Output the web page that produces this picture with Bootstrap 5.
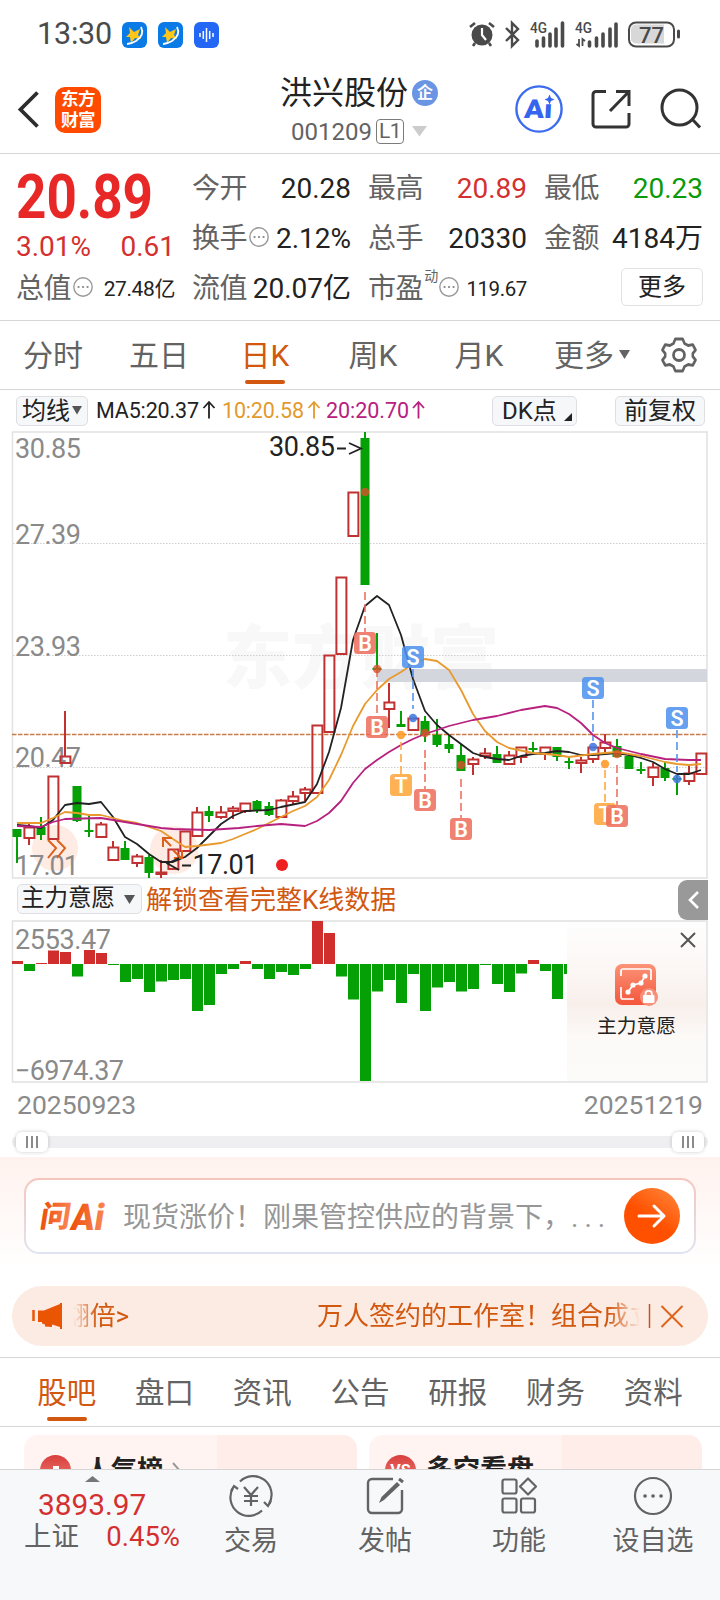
<!DOCTYPE html>
<html lang="zh-CN">
<head>
<meta charset="utf-8">
<meta name="viewport" content="width=device-width, initial-scale=1">
<title>洪兴股份 001209</title>
<link rel="stylesheet" href="https://cdn.jsdelivr.net/npm/bootstrap@5.3.0/dist/css/bootstrap.min.css">
<style>
  :root { --ink:#222; --sub:#636363; --axis:#8a8a8a; --rise:#d4302f; --fall:#0a9a0a; --brand:#d2570f; --rule:#d6d6d6; }
  body { width:720px; height:1600px; overflow:hidden; background:#fff; color:var(--ink); font-family:Roboto,"Noto Sans CJK SC",sans-serif; line-height:1; }
  svg { display:block; flex:none; overflow:visible; }
  svg text { font-family:Roboto,"Noto Sans CJK SC",sans-serif; }
  .status { height:66px; padding:3px 40px 0 37px; color:#4a4a4a; }
  .clock { font-size:30.5px; margin-right:10px; letter-spacing:-.2px; }
  .topbar { height:88px; display:grid; grid-template-columns:1fr auto 1fr; align-items:center; border-bottom:1px solid var(--rule); padding:0 19px 0 17px; }
  .brandmark { width:46px; height:46px; border-radius:10px; background:#ff4a00; color:#fff; font-size:17.5px; font-weight:700; line-height:21px; letter-spacing:-.6px; text-align:center; padding-top:2px; margin-left:14px; }
  .stockname { font-size:32px; }
  .corp { width:26px; height:26px; border-radius:50%; background:#6a94e4; color:#fff; font-size:16px; font-weight:700; }
  .code { font-size:24px; color:var(--sub); }
  .level { width:28px; height:25px; border:1.5px solid #7b7b7b; border-radius:4px; font-size:21px; letter-spacing:-.5px; }
  .quote { height:167px; border-bottom:1px solid var(--rule); padding:10px 17px 0 16px; display:grid; grid-template-columns:repeat(4,1fr); grid-template-rows:repeat(3,50px); column-gap:17px; font-size:28px; white-space:nowrap; }
  .quote .cellx { display:flex; align-items:center; justify-content:space-between; min-width:0; }
  .quote .lbl { color:var(--sub); display:flex; align-items:center; gap:2px; letter-spacing:-.4px; }
  .quote .slim { font-size:21px; letter-spacing:-.4px; }
  .rise { color:var(--rise); } .fall { color:var(--fall); }
  .lead-price { grid-row:1 / span 2; padding-bottom:3px; }
  .morebtn { width:82px; height:38px; border:1.5px solid #e2e2e2; border-radius:5px; font-size:24px; color:var(--ink); padding:0; line-height:1; margin-bottom:4px; }
  .period { height:69px; border-bottom:1px solid var(--rule); font-size:30px; color:var(--sub); }
  .period .tabx { width:106px; height:68px; position:relative; padding-top:2px; }
  .tabx.on { color:var(--brand); }
  .tabx.on::after { content:""; position:absolute; left:50%; margin-left:-20px; bottom:5px; width:40px; height:4px; border-radius:2px; background:var(--brand); }
  .tools { height:41px; padding:0 15px 0 16px; font-size:21.5px; white-space:nowrap; }
  .chip { height:30px; border:1.5px solid #dddfe3; border-radius:5px; background:#f6f7f9; font-size:24px; display:flex; align-items:center; }
  .strip { height:41px; padding:5px 12px 0 17px; }
  .strip .unlock { font-size:26px; color:var(--brand); margin:3px 0 0 4px; letter-spacing:0; }
  .collapse-key { width:30px; height:40px; border-radius:9px 0 0 9px; background:#999; margin-top:-4px; }
  .dates { height:41px; padding:2px 17px 0; font-size:26.5px; color:var(--axis); }
  .slider { height:32px; padding:11px 12px 0; }
  .track { height:12px; border-radius:6px; background:#efeff2; }
  .grip { width:32px; height:20px; border-radius:6px; background:#fff; box-shadow:0 0 4px #0003; }
  .ask { height:129px; padding:21px 24px 0; background:linear-gradient(#fff2ee,#fff 88%); }
  .askbox { height:76px; border:2px solid transparent; border-radius:15px; background:linear-gradient(#fff,#fff) padding-box,linear-gradient(#f5c5bd,#dfe4f0) border-box; padding:0 14px 0 12px; }
  .askbox .q { font-size:28px; color:#969696; margin:3px 0 0 19px; white-space:nowrap; }
  .go { width:56px; height:56px; border-radius:50%; background:linear-gradient(35deg,#ff5000 45%,#ff8a3d); }
  .notice { height:60px; margin:0 12px; border-radius:30px; background:#fcebe2; color:var(--brand); font-size:26px; padding:0 24px 0 20px; white-space:nowrap; }
  .marquee { width:567px; margin-left:10px; padding:2px 0; overflow:hidden; display:flex; -webkit-mask-image:linear-gradient(90deg,transparent,#000 24px,#000 535px,transparent 567px); mask-image:linear-gradient(90deg,transparent,#000 24px,#000 535px,transparent 567px); }
  .sections { height:70px; margin-top:11px; border-top:1px solid var(--rule); border-bottom:1px solid var(--rule); padding:0 18px; font-size:29.5px; color:var(--sub); }
  .sections .tabx { height:68px; position:relative; padding-top:4px; }
  .teasers { height:42px; padding:8px 18px 0 24px; gap:12px; overflow:hidden; }
  .teaser { width:333px; height:80px; border-radius:14px; background:linear-gradient(90deg,#fff4f1 58%,#ffedea 58%); font-size:26px; font-weight:700; padding:20px 16px 0; overflow:hidden; }
  .dot { width:31px; height:31px; border-radius:50%; background:linear-gradient(#d83f3f,#f08070); color:#fff; font-size:16px; }
  .dock { height:131px; border-top:1px solid var(--rule); background:#f7f8fa; color:var(--sub); font-size:27px; }
  .dock .item { padding-top:6px; }
  .dock .item span { margin-top:12px; }
  .dock .index { width:180px; padding:6px 0 0 24px; }
</style>
</head>
<body>
<div class="status d-flex align-items-center">
  <span class="clock">13:30</span>
  <div class="d-flex me-auto" style="gap:11px">
    <svg width="25" height="26"><use href="#app"/></svg>
    <svg width="25" height="26"><use href="#app"/></svg>
    <svg width="25" height="26"><rect width="25" height="26" rx="6" fill="#2467f5"/><path d="M6 11v4M9.3 9v8M12.5 6v14M15.7 9v8M19 11v4" stroke="#fff" stroke-width="1.5"/></svg>
  </div>
  <svg width="212" height="28" viewBox="468 21 212 28">
    <g fill="none" stroke="#4a4a4a">
      <circle cx="482" cy="35" r="10.500" fill="#4a4a4a" stroke="none"/><path d="M482 28v7l4 5" stroke="#fff" stroke-width="2.2"/><path d="M470 27l5-4M494 27l-5-4M475 43l-2 3M489 43l2 3" stroke-width="2.6"/>
      <path d="M506 28l12 12-6 6V23l6 6-12 12" stroke-width="2.4"/>
      <path d="M537 46v-5M543.5 46v-8M550 46V34M556 46V29M562.500 46V23" stroke-width="3.6" stroke-linecap="round"/>
      <path d="M589.500 46v-4M596.500 46v-8M603 46V34M610 46V29M616 46V24" stroke-width="3.6" stroke-linecap="round"/>
      <path d="M579 39v7l-2.500-2M582.500 46v-7l2.500 2" stroke-width="1.8"/>
    </g>
    <path d="M636 24.500h28v19h-28a5 5 0 0 1-5-5v-9a5 5 0 0 1 5-5" fill="#d8d8d8"/>
    <rect x="629" y="22.500" width="45" height="24" rx="7" stroke-width="2" fill="none" stroke="#4a4a4a"/><path d="M678.500 31v6" stroke="#4a4a4a" stroke-width="3" stroke-linecap="round"/>
    <g fill="#4a4a4a" font-weight="500"><text x="530" y="33" font-size="14.500" textLength="17" lengthAdjust="spacingAndGlyphs">4G</text><text x="575" y="33" font-size="14.500" textLength="17" lengthAdjust="spacingAndGlyphs">4G</text><text x="639" y="42.500" font-size="22" textLength="25">77</text></g>
    <defs>
      <symbol id="app" viewBox="0 0 25 26"><rect width="25" height="26" rx="6" fill="#0a7be6"/><path d="M7 5l5 5 6-3-2 6 3 4-6-1-4 5-1-6-4 0 4-4z" fill="#ffc61a"/><path d="M19 5q4 8-5 14-5 3-9 3" fill="none" stroke="#fff" stroke-width="1.800"/></symbol>
      <symbol id="more" viewBox="0 0 20 20"><circle cx="10" cy="10" r="9.200" fill="none" stroke="#999" stroke-width="1.400"/><path d="M5.500 10h.1M10 10h.1M14.500 10h.1" stroke="#888" stroke-width="2.200" stroke-linecap="round"/></symbol>
    </defs>
  </svg>
</div>

<header class="topbar">
  <div class="d-flex align-items-center">
    <svg width="24" height="38" viewBox="0 0 24 38"><path d="M20.500 1.500L3.500 18.500l17 17" fill="none" stroke="#2d2d2d" stroke-width="3.800"/></svg>
    <div class="brandmark">东方<br>财富</div>
  </div>
  <div class="d-flex flex-column align-items-center" style="gap:10px;margin-top:2px">
    <div class="d-flex align-items-center"><span class="stockname">洪兴股份</span><span class="corp d-flex align-items-center justify-content-center ms-1">企</span></div>
    <div class="code d-flex align-items-center"><span>001209</span><span class="level d-flex align-items-center justify-content-center mx-1">L1</span>
      <svg class="ms-1" width="15" height="11"><path d="M0 0h15L7.500 10.500z" fill="#ccc"/></svg></div>
  </div>
  <svg class="ms-auto" width="186" height="48" viewBox="515 86 186 48">
    <g fill="none" stroke="#333" stroke-width="3">
      <circle cx="539" cy="109" r="22.600" stroke="#3b6cf0" stroke-width="2.400"/>
      <path d="M606 91.500h-10a3 3 0 0 0-3 3V124a3 3 0 0 0 3 3h30a3 3 0 0 0 3-3v-11M616 91.500h13V106M629 91.500L610 111"/>
      <circle cx="679.500" cy="107.500" r="17.500"/><path d="M692 119l8 8.500"/>
    </g>
    <text x="524" y="118.500" font-size="26" font-weight="900" fill="#3565ee" textLength="28" lengthAdjust="spacingAndGlyphs" transform="skewX(-3) translate(6 0)">Ai</text>
    <circle cx="549" cy="99" r="4.500" fill="#fff"/><path d="M549.500 94.500l1.500 3.500 3.500 1.500-3.500 1.500-1.500 3.500-1.500-3.500-3.500-1.500 3.500-1.500z" fill="#3565ee"/>
  </svg>
</header>

<section class="quote">
  <div class="lead-price d-flex flex-column justify-content-between rise">
    <svg width="150" height="60"><text x="0" y="53.500" font-size="61" font-weight="700" fill="#e82727" textLength="137" lengthAdjust="spacingAndGlyphs">20.89</text></svg>
    <div class="d-flex justify-content-between"><span>3.01%</span><span>0.61</span></div>
  </div>
  <div class="cellx"><span class="lbl">今开</span><span>20.28</span></div>
  <div class="cellx"><span class="lbl">最高</span><span class="rise">20.89</span></div>
  <div class="cellx"><span class="lbl">最低</span><span class="fall">20.23</span></div>
  <div class="cellx"><span class="lbl">换手<svg width="20" height="20" class="mb-1"><use href="#more"/></svg></span><span>2.12%</span></div>
  <div class="cellx"><span class="lbl">总手</span><span>20330</span></div>
  <div class="cellx"><span class="lbl">金额</span><span>4184万</span></div>
  <div class="cellx"><span class="lbl">总值<svg width="20" height="20" class="mb-1"><use href="#more"/></svg></span><span class="slim">27.48亿</span></div>
  <div class="cellx"><span class="lbl">流值</span><span>20.07亿</span></div>
  <div class="cellx"><span class="lbl">市盈<span style="font-size:14px;margin:0 -1px 26px -1px">动</span><svg width="20" height="20" class="mb-1"><use href="#more"/></svg></span><span class="slim" style="font-size:20.500px">119.67</span></div>
  <div class="cellx justify-content-end"><button class="morebtn btn bg-white">更多</button></div>
</section>

<nav class="period d-flex align-items-center">
  <div class="tabx d-flex align-items-center justify-content-center">分时</div>
  <div class="tabx d-flex align-items-center justify-content-center">五日</div>
  <div class="tabx on d-flex align-items-center justify-content-center">日K</div>
  <div class="tabx d-flex align-items-center justify-content-center ps-1">周K</div>
  <div class="tabx d-flex align-items-center justify-content-center ps-1">月K</div>
  <div class="d-flex align-items-center" style="margin-left:24px;padding-top:2px">更多<svg class="mb-1" style="margin-left:5px" width="11" height="9"><path d="M0 0h11L5.500 9z" fill="#636363"/></svg></div>
  <svg class="ms-auto" style="margin-right:23px" width="36" height="36" viewBox="-18 -18 36 36" fill="none" stroke="#636363" stroke-width="2.800" stroke-linejoin="round"><path d="M-4-16h8l2 4.500 4 2 5-.8 3 5.300-3 3.500v3l3 3.500-3 5.300-5-.8-4 2-2 4.500h-8l-2-4.500-4-2-5 .8-3-5.300 3-3.500v-3l-3-3.500 3-5.300 5 .8 4-2z" transform="scale(.92 1)"/><circle r="5.500"/></svg>
</nav>

<div class="tools d-flex align-items-center">
  <div class="chip" style="width:72px;padding-left:5px">均线<svg style="margin-left:2px" width="10" height="9"><path d="M0 0h10L5 8.500z" fill="#555"/></svg></div>
  <svg width="340" height="30" viewBox="88 396.500 340 30" font-size="21.500">
    <g id="maText"><text x="96" y="418.500" textLength="103" fill="#222">MA5:20.37</text><text x="222" y="418.500" textLength="82" fill="#e39a2c">10:20.58</text><text x="326" y="418.500" textLength="83" fill="#b8207f">20:20.70</text></g>
    <g fill="none" stroke-width="1.800"><path d="M209 419v-16.500M203.500 408.500l5.500-6 5.500 6" stroke="#222"/><path d="M314 419v-16.500M308.500 408.500l5.500-6 5.500 6" stroke="#e39a2c"/><path d="M418.500 419v-16.500M413 408.500l5.500-6 5.500 6" stroke="#b8207f"/></g>
  </svg>
  <div class="chip ms-auto position-relative" style="width:85px;padding-left:9px">DK点<svg class="position-absolute" style="right:4px;bottom:4px" width="8" height="8"><path d="M8 0v8H0z" fill="#222"/></svg></div>
  <div class="chip justify-content-center" style="width:90px;margin-left:38px">前复权</div>
</div>

<svg id="kline" width="720" height="448" viewBox="0 431 720 448"></svg>

<div class="strip d-flex align-items-start">
  <div class="chip" style="width:125px;padding-left:3px;font-size:23.500px">主力意愿<svg style="margin-left:9px" width="11" height="9"><path d="M0 0h11L5.500 9z" fill="#555"/></svg></div>
  <span class="unlock">解锁查看完整K线数据</span>
  <div class="collapse-key ms-auto d-flex align-items-center justify-content-center"><svg width="14" height="20"><path d="M12 2L4 10l8 8" fill="none" stroke="#fff" stroke-width="2.600"/></svg></div>
</div>

<svg id="force" width="720" height="164" viewBox="0 920 720 164"></svg>

<div class="dates d-flex justify-content-between align-items-center"><span>20250923</span><span>20251219</span></div>
<div class="slider"><div class="track d-flex align-items-center justify-content-between px-1">
  <div class="grip d-flex align-items-center justify-content-center"><svg width="12" height="12"><path d="M1 0v12M6 0v12M11 0v12" stroke="#666" stroke-width="1.500"/></svg></div>
  <div class="grip d-flex align-items-center justify-content-center"><svg width="12" height="12"><path d="M1 0v12M6 0v12M11 0v12" stroke="#666" stroke-width="1.500"/></svg></div>
</div></div>

<section class="ask"><div class="askbox d-flex align-items-center">
  <svg width="66" height="36" viewBox="38 1198 66 36"><defs><linearGradient id="og" x1="0" x2="1"><stop stop-color="#ee4d08"/><stop offset="1" stop-color="#f98655"/></linearGradient></defs>
    <g fill="url(#og)" font-weight="900"><text transform="translate(39 1227) skewX(-9)" font-size="30" font-weight="900">问</text><text transform="translate(69.500 1230) skewX(-9)" font-size="37" textLength="33" lengthAdjust="spacingAndGlyphs">Ai</text></g></svg>
  <span class="q">现货涨价！刚果管控供应的背景下，<span style="letter-spacing:6px">...</span></span>
  <div class="go ms-auto d-flex align-items-center justify-content-center"><svg width="30" height="26"><path d="M2 13h25M17 3l10 10-10 10" fill="none" stroke="#fff" stroke-width="3" stroke-linecap="round" stroke-linejoin="round"/></svg></div>
</div></section>

<div class="notice d-flex align-items-center">
  <svg width="31" height="28"><path d="M1.500 8v11" stroke="#ea5504" stroke-width="2.500"/><path d="M6 8.500h6L28 2V1h2v26h-2v-2l-8-2.500v2.500l-7-.5v-2l-3-1v-1.500H6z" fill="#ea5504"/></svg>
  <div class="marquee"><span style="margin-left:-9px;letter-spacing:-.2px">翃倍&gt;</span><span style="margin-left:188px">万人签约的工作室！组合成立</span></div>
  <svg class="ms-auto" width="36" height="26"><path d="M1.500 1v24" stroke="#c0591f" stroke-width="1.500"/><path d="M13.500 3l21 21M34.500 3l-21 21" stroke="#e0631c" stroke-width="2"/></svg>
</div>

<nav class="sections d-flex">
  <div class="tabx on flex-fill d-flex align-items-center justify-content-center">股吧</div>
  <div class="tabx flex-fill d-flex align-items-center justify-content-center">盘口</div>
  <div class="tabx flex-fill d-flex align-items-center justify-content-center">资讯</div>
  <div class="tabx flex-fill d-flex align-items-center justify-content-center">公告</div>
  <div class="tabx flex-fill d-flex align-items-center justify-content-center">研报</div>
  <div class="tabx flex-fill d-flex align-items-center justify-content-center">财务</div>
  <div class="tabx flex-fill d-flex align-items-center justify-content-center">资料</div>
</nav>
<div class="teasers d-flex">
  <div class="teaser d-flex align-items-start"><span class="dot"><svg width="31" height="31"><path d="M6 18h3v-3h4v-4h6v7h4v6H6z" fill="#fff"/></svg></span><span style="margin:2px 0 0 14px">人气榜</span><svg style="margin:7px 0 0 9px" width="10" height="18"><path d="M1 1l7 8-7 8" fill="none" stroke="#999" stroke-width="2"/></svg></div>
  <div class="teaser d-flex align-items-start"><span class="dot d-flex align-items-center justify-content-center">VS</span><span style="margin:2px 0 0 10px;font-size:27px">多空看盘</span></div>
</div>

<footer class="dock d-flex">
  <div class="index">
    <svg style="margin-left:61px" width="15" height="6"><path d="M0 6L7.500 0 15 6z" fill="#777"/></svg>
    <div class="rise" style="font-size:29.800px;margin:8px 0 0 14px">3893.97</div>
    <div class="d-flex justify-content-between" style="font-size:27.500px;margin-top:3px"><span>上证</span><span class="rise">0.45%</span></div>
  </div>
  <div class="item d-flex flex-column align-items-center" style="width:142px">
    <svg width="46" height="40" viewBox="-23 -20 46 40" fill="none" stroke="#636363" stroke-width="2.200"><path d="M-11-14.500A18.500 18.500 0 0 1 18 8M11 14.500A18.500 18.500 0 0 1-18-8"/><path d="M20 5l-3 5-4-4M-20-5l3-5 4 3"/><path d="M-7-9L0-1l7-8M0-1v11M-7 0H7M-7 5H7"/></svg>
    <span>交易</span></div>
  <div class="item d-flex flex-column align-items-center" style="width:126px">
    <svg width="40" height="40" viewBox="0 0 40 40" fill="none" stroke="#636363" stroke-width="2.400"><path d="M28 3H7a4 4 0 0 0-4 4v26a4 4 0 0 0 4 4h26a4 4 0 0 0 4-4V14"/><path d="M14 27l2.500-6L32 6l3 3L19 24z" fill="#636363" stroke="none"/><path d="M34 3l4 3" stroke-width="3"/></svg>
    <span>发帖</span></div>
  <div class="item d-flex flex-column align-items-center" style="width:142px">
    <svg width="38" height="40" viewBox="0 0 38 40" fill="none" stroke="#636363" stroke-width="2.200"><rect x="2.500" y="3.500" width="14" height="14" rx="2"/><rect x="2.500" y="22.500" width="14" height="14" rx="2"/><rect x="21" y="22.500" width="14" height="14" rx="2"/><path d="M28 2.500l8 8-8 8-8-8z" stroke-linejoin="round"/></svg>
    <span>功能</span></div>
  <div class="item d-flex flex-column align-items-center" style="width:126px">
    <svg width="40" height="40" viewBox="0 0 40 40" fill="none" stroke="#636363"><circle cx="20" cy="20" r="18" stroke-width="2.200"/><path d="M12 20h.1M20 20h.1M28 20h.1" stroke-width="3.600" stroke-linecap="round"/></svg>
    <span>设自选</span></div>
</footer>

<script src="https://cdn.jsdelivr.net/npm/bootstrap@5.3.0/dist/js/bootstrap.bundle.min.js"></script>
<script>
  const RED = '#c03231', GREEN = '#05a005';
  const X = i => 17 + 12 * i;
  const txt = (x, y, s, len, fill = '#8a8a8a', size = 27) => `<text x="${x}" y="${y}" font-size="${size}" fill="${fill}" textLength="${len}">${s}</text>`;

  // r/g, body top, body bottom, wick top, wick bottom
  const candles = [
    ['g',829,837,829,863],['r',827,838,822,845],['g',827,835,817,840],['r',776,839,776,839],['r',756,763,711,763],
    ['g',786,821,786,822],['g',830,832,816,837],['r',824,837,822,838],['r',847,860,841,860],['g',848,860,841,860],
    ['r',856,863,854,867],['g',857,873,855,878],['r',872,874,860,878],['r',849,869,849,869],['r',831,851,831,851],
    ['r',812,836,807,836],['g',811,816,806,822],['r',812,817,806,819],['r',808,811,806,819],['r',803,811,803,813],
    ['g',801,810,800,813],['g',806,815,802,816],['r',800,817,799,817],['r',796,801,791,804],['r',789,793,787,801],
    ['r',725,793,725,793],['r',655,732,655,733],['r',577,654,577,654],['r',492,536,492,536],['g',438,585,432,585],
    ['g',668,670,633,670],['r',702,709,683,728],['g',724,727,711,727],['r',718,730,718,730],['g',721,735,716,742],
    ['g',735,745,719,747],['g',744,749,735,753],['g',755,771,744,771],['r',759,764,757,775],['r',753,756,748,759],
    ['g',754,763,746,763],['r',755,764,751,764],['r',747,757,747,763],['g',748,750,742,753],['r',747,754,747,760],
    ['g',747,757,747,761],['g',761,763,757,769],['r',760,763,757,773],['r',747,759,747,763],['r',742,748,734,755],
    ['g',746,757,739,757],['g',756,769,755,769],['g',769,771,762,774],['r',767,777,763,786],['g',768,778,762,781],
    ['g',778,780,775,795],['r',773,781,766,785],['r',753,774,753,774]];
  const ma5 = '17,825 29,826 41,828 53,820 65,805 77,803 89,804 101,802 113,817 125,837 137,844 149,854 161,862 173,862 185,857 197,848 209,836 221,824 233,816 245,811 269,810 281,807 305,802 317,784 329,752 341,708 353,640 365,606 377,596 389,605 401,635 413,679 425,711 437,725 449,735 461,744 473,753 485,757 497,759 509,760 521,756 533,754 545,753 557,751 569,752 581,755 593,755 605,754 617,753 629,755 641,758 653,762 665,769 677,774 689,774 701,770';
  const ma10 = '17,823 41,823 53,818 65,812 77,813 89,815 101,815 125,821 137,823 161,831 185,847 197,846 221,843 233,839 245,834 257,829 269,823 293,811 305,806 317,797 329,780 341,755 353,726 365,704 377,690 389,679 401,672 413,664 425,659 437,661 449,670 461,690 473,714 485,731 497,742 509,748 533,753 557,755 569,757 593,754 617,752 641,756 665,762 677,764 689,765 701,764';
  const ma20 = '17,826 41,827 53,822 65,819 101,818 125,822 161,828 173,829 209,830 239,828 257,826 281,824 305,826 317,821 329,813 341,801 353,783 365,769 377,760 389,752 401,745 413,739 425,734 437,730 449,726 473,720 497,716 521,710 533,708 545,706 557,708 569,714 581,723 593,735 605,743 617,748 641,754 665,759 689,760 701,760';
  // letter, x, label centre, dash from, dash to, dot
  const marks = [['B',365,643,592,632,492],['B',377,727,669,716,669],['S',413,657,669,709,718],['T',401,785,742,774,735],
    ['B',425,800,750,789,733],['B',461,829,779,818,765],['S',593,688,700,741,747],['S',677,718,730,772,779],
    ['T',605,814,770,802,764],['B',617,816,765,805,754]];
  const tint = {B:['#ec6f5ddd','#d9512bcc'],S:['#4f91eedd','#3f78e0dd'],T:['#ffa63add','#ff9b2be6']};

  let k = '<text x="223" y="683" font-size="69" font-weight="900" fill="#f8f8f9" textLength="276">东方财富</text>';
  k += '<rect x="12.500" y="432" width="694.500" height="446" fill="none" stroke="#e3e3e3" stroke-width="1.600"/>';
  for (const y of [543.5, 655.5, 767.5]) k += `<path d="M13 ${y}H707" stroke="#cfcfcf" stroke-dasharray="1.500 1.500"/>`;
  k += '<rect x="377" y="669" width="330" height="13" fill="#d3d7dd"/>';
  k += txt(15,458,'30.85',66) + txt(15,544,'27.39',66) + txt(15,656,'23.93',66) + txt(15,767,'20.47',66);
  k += '<path d="M12 734.500H707" stroke="#c97a4a" stroke-width="1.300" stroke-dasharray="4.500 1.500"/>';
  k += '<circle cx="55" cy="848" r="23" fill="#fdddd0" opacity=".6"/><circle cx="174" cy="850" r="24" fill="#fdddd0" opacity=".6"/>';
  k += txt(15,875,'17.01',64);
  candles.forEach(([c, t, b, wt, wb], i) => {
    const x = X(i), col = c === 'r' ? RED : GREEN;
    if (c === 'g') k += `<path d="M${x} ${wt}V${wb}" stroke="${col}" stroke-width="2"/><rect x="${x-4.5}" y="${t}" width="9" height="${b-t}" fill="${col}"/>`;
    else k += `<path d="M${x} ${wt}V${t}M${x} ${b}V${wb}" stroke="${col}" stroke-width="2"/><rect x="${x-4.6}" y="${t+.5}" width="10" height="${Math.max(b-t-.5,1.5)}" fill="none" stroke="${col}" stroke-width="2"/>`;
  });
  [[ma5,'#222'],[ma10,'#e89a2e'],[ma20,'#b8207f']].forEach(([p, c]) => k += `<polyline points="${p}" fill="none" stroke="${c}" stroke-width="1.800" stroke-linejoin="round"/>`);
  k += '<path d="M48 840l8 8-8 10M57 840l8 8-8 10M163 847v-9h9M163 838l8 8M173 850l8 8M182 850v8h-8" fill="none" stroke="#dc5f1a" stroke-width="2"/>';
  for (const [l, x, cy, a, b, d] of marks) {
    const [box, dot] = tint[l];
    k += `<path d="M${x} ${a}V${b}" stroke="${box}" stroke-width="1.800" stroke-dasharray="8 4"/><circle cx="${x}" cy="${d}" r="4.200" fill="${dot}"/><rect x="${x-11}" y="${cy-11}" width="22" height="22" rx="3.500" fill="${box}"/><text x="${x}" y="${cy+7.5}" font-size="21.500" font-weight="600" text-anchor="middle" fill="#fff">${l}</text>`;
  }
  k += txt(269,456,'30.85',66,'#222') + '<path d="M337 448.500h9M349 443l12 5.500-12 5.500" fill="none" stroke="#222" stroke-width="1.800"/>';
  k += '<path d="M179 870l-11.500-6.500 11.500-5.500M182 865.500h9" fill="none" stroke="#222" stroke-width="1.800"/>' + txt(192.5,874,'17.01',66,'#222');
  k += '<circle cx="282" cy="865" r="6" fill="#ee2020"/>';
  document.getElementById('kline').innerHTML = k;

  const force = [3,-7,1,13.5,12,-12.5,14,11,-1,-18,-15,-28,-17.5,-16,-15,-47,-41,-10,-5,3,-5,-15,-8,-11,-5,43,31,-12.5,-35.5,-117,-27.5,-16,-39,-10,-47,-23.5,-18,-27.5,-25,-1,-20,-28,-9.5,4,-7,-35,-10];
  let f = '<defs><linearGradient id="pn" x2="0" y2="1"><stop stop-color="#fefefe"/><stop offset=".3" stop-color="#fcf7f5"/><stop offset=".52" stop-color="#f8efeb"/><stop offset=".72" stop-color="#fcf9f7"/><stop offset="1" stop-color="#fbfbfa"/></linearGradient><linearGradient id="ic" x2="0" y2="1"><stop stop-color="#fb9378"/><stop offset="1" stop-color="#f4553b"/></linearGradient></defs>';
  f += '<rect x="12.500" y="921" width="694.500" height="161" fill="none" stroke="#e3e3e3" stroke-width="1.600"/>' + txt(15,949,'2553.47',96) + txt(15,1080,'−6974.37',109);
  force.forEach((v, i) => f += `<rect x="${12+12*i}" y="${v > 0 ? 964-v : 964}" width="11" height="${Math.abs(v)}" fill="${v > 0 ? '#cf2e2d' : GREEN}"/>`);
  f += '<rect x="567" y="922" width="139" height="159" fill="url(#pn)"/><path d="M681 933l14 14M695 933l-14 14" stroke="#555" stroke-width="2"/>';
  f += '<rect x="615" y="964" width="41" height="41" rx="7" fill="url(#ic)"/><g fill="none" stroke="#fff" stroke-width="1.700"><path d="M621 976v-5a2 2 0 0 1 2-2h26a2 2 0 0 1 2 2v9M621 987v10a2 2 0 0 0 2 2h11"/><path d="M628 992l5-7 8-2 4-7"/></g><g fill="#fff"><circle cx="628" cy="992" r="2.600"/><circle cx="633" cy="985" r="2.600"/><circle cx="641" cy="983" r="2.600"/><circle cx="645" cy="976" r="2.600"/></g>';
  f += '<circle cx="649" cy="997" r="9" fill="#f98f78"/><rect x="643" y="995" width="11.500" height="8" rx="1" fill="#fff"/><path d="M645.500 996v-2a3.200 3.200 0 0 1 6.400 0v2" fill="none" stroke="#fff" stroke-width="1.800"/>';
  f += txt(597,1033,'主力意愿',79,'#222',19.8);
  document.getElementById('force').innerHTML = f;
</script>
</body>
</html>
